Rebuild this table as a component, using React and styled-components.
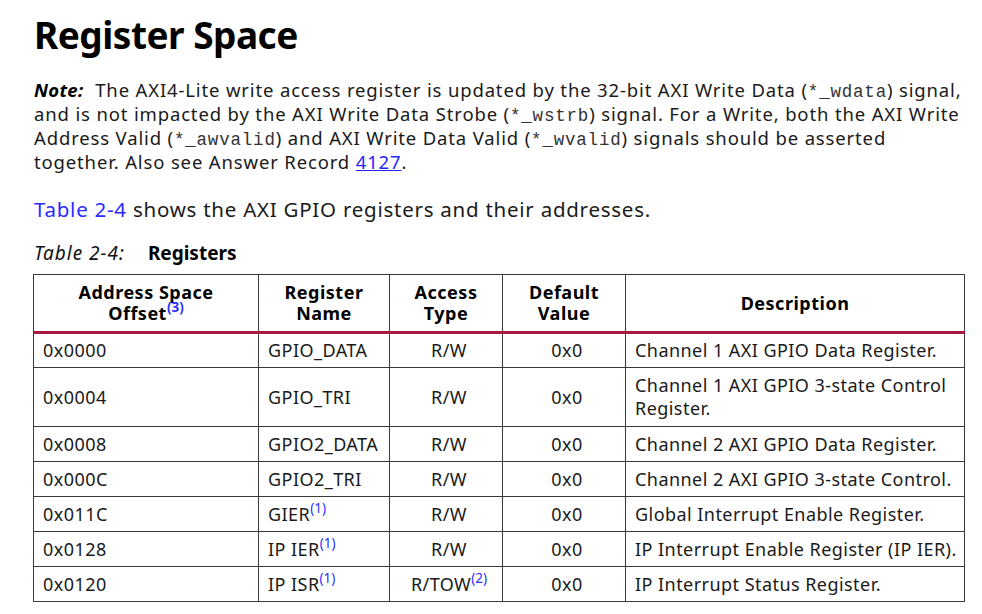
import React from 'react';
import styled, { createGlobalStyle } from 'styled-components';

const GlobalStyle = createGlobalStyle`
  html, body {
    margin: 0;
    padding: 0;
    background: #ffffff;
  }
  body {
    font-family: "Noto Sans", "Open Sans", sans-serif;
    color: #111;
  }
`;

const Page = styled.div`
  width: 982px;
  height: 614px;
  box-sizing: border-box;
  padding: 12px 10px 0 34px;
  overflow: hidden;
`;

const Title = styled.h1`
  margin: 0;
  font-size: 37px;
  line-height: 46px;
  letter-spacing: -0.5px;
  font-weight: 700;
  color: #000;
`;

const Note = styled.p`
  margin: 20px 0 0 0;
  font-size: 18.5px;
  line-height: 24px;
  letter-spacing: 0.85px;
  color: #1a1a1a;
`;

const Line = styled.span`
  display: block;
  white-space: nowrap;
`;

const NoteLabel = styled.em`
  font-weight: 700;
  font-style: italic;
  color: #000;
  letter-spacing: 0.3px;
  margin-right: 6px;
`;

const Code = styled.code`
  font-family: "Liberation Mono", "Courier New", monospace;
  font-size: 17.5px;
  line-height: 1;
  letter-spacing: 0.8px;
  color: #333;
`;

const Link = styled.a`
  color: #2424ff;
  text-decoration: underline;
`;

const Intro = styled.p`
  margin: 22px 0 0 0;
  font-size: 20.5px;
  line-height: 26px;
  letter-spacing: 0.75px;
  color: #1a1a1a;
`;

const XRef = styled.span`
  color: #2a2aff;
`;

const Caption = styled.div`
  margin-top: 19px;
  font-size: 19px;
  line-height: 24px;
  display: flex;
  gap: 23px;
`;

const CaptionNum = styled.span`
  font-style: italic;
  letter-spacing: 1px;
  color: #111;
`;

const CaptionTitle = styled.span`
  font-weight: 700;
  color: #000;
`;

const Table = styled.table`
  margin: 9px 0 0 -1px;
  border-collapse: collapse;
  width: 931px;
  table-layout: fixed;
  border: 1px solid #3a3a3a;
`;

const HeadRow = styled.tr`
  height: 58px;
`;

const Row = styled.tr`
  height: ${(p) => (p.$tall ? 59 : 35)}px;
`;

const HeadCell = styled.th`
  font-size: 18px;
  line-height: 21px;
  letter-spacing: 0.5px;
  font-weight: 700;
  color: #000;
  text-align: center;
  padding: 0 6px;
  border: 1px solid #3a3a3a;
  border-bottom: 3px solid #aa1842;
`;

const Cell = styled.td`
  font-size: 18px;
  line-height: 23px;
  letter-spacing: 0.45px;
  color: #1a1a1a;
  text-align: ${(p) => (p.$center ? 'center' : 'left')};
  padding: 0 3px 0 9px;
  border: 1px solid #3a3a3a;
  vertical-align: middle;
`;

const Sup = styled.sup`
  font-size: 13.5px;
  line-height: 0;
  letter-spacing: 0;
  color: #2f2fff;
  font-weight: ${(p) => (p.$bold ? 700 : 400)};
  vertical-align: 8px;
`;

const rows = [
  ['0x0000', 'GPIO_DATA', null, 'R/W', null, 'Channel 1 AXI GPIO Data Register.'],
  ['0x0004', 'GPIO_TRI', null, 'R/W', null, 'Channel 1 AXI GPIO 3-state Control Register.', true],
  ['0x0008', 'GPIO2_DATA', null, 'R/W', null, 'Channel 2 AXI GPIO Data Register.'],
  ['0x000C', 'GPIO2_TRI', null, 'R/W', null, 'Channel 2 AXI GPIO 3-state Control.'],
  ['0x011C', 'GIER', '(1)', 'R/W', null, 'Global Interrupt Enable Register.'],
  ['0x0128', 'IP IER', '(1)', 'R/W', null, 'IP Interrupt Enable Register (IP IER).'],
  ['0x0120', 'IP ISR', '(1)', 'R/TOW', '(2)', 'IP Interrupt Status Register.'],
];

export default function App() {
  return (
    <>
      <GlobalStyle />
      <Page>
        <Title>Register Space</Title>
        <Note>
          <Line>
            <NoteLabel>Note:</NoteLabel> The AXI4-Lite write access register is updated by the 32-bit AXI Write Data
            (<Code>*_wdata</Code>) signal,
          </Line>
          <Line>
            and is not impacted by the AXI Write Data Strobe (<Code>*_wstrb</Code>) signal. For a Write, both the AXI
            Write
          </Line>
          <Line>
            Address Valid (<Code>*_awvalid</Code>) and AXI Write Data Valid (<Code>*_wvalid</Code>) signals should be
            asserted
          </Line>
          <Line>
            together. Also see Answer Record <Link href="#">4127</Link>.
          </Line>
        </Note>
        <Intro>
          <XRef>Table 2-4</XRef> shows the AXI GPIO registers and their addresses.
        </Intro>
        <Caption>
          <CaptionNum>Table 2-4:</CaptionNum>
          <CaptionTitle>Registers</CaptionTitle>
        </Caption>
        <Table>
          <colgroup>
            <col style={{ width: 225 }} />
            <col style={{ width: 131 }} />
            <col style={{ width: 113 }} />
            <col style={{ width: 123 }} />
            <col style={{ width: 339 }} />
          </colgroup>
          <thead>
            <HeadRow>
              <HeadCell>
                Address Space
                <br />
                Offset<Sup $bold>(3)</Sup>
              </HeadCell>
              <HeadCell>
                Register
                <br />
                Name
              </HeadCell>
              <HeadCell>
                Access
                <br />
                Type
              </HeadCell>
              <HeadCell>
                Default
                <br />
                Value
              </HeadCell>
              <HeadCell>Description</HeadCell>
            </HeadRow>
          </thead>
          <tbody>
            {rows.map(([addr, name, nameNote, access, accessNote, desc, tall]) => (
              <Row key={addr} $tall={tall}>
                <Cell>{addr}</Cell>
                <Cell>
                  {name}
                  {nameNote && <Sup>{nameNote}</Sup>}
                </Cell>
                <Cell $center>
                  {access}
                  {accessNote && <Sup>{accessNote}</Sup>}
                </Cell>
                <Cell $center>0x0</Cell>
                <Cell>{desc}</Cell>
              </Row>
            ))}
          </tbody>
        </Table>
      </Page>
    </>
  );
}
